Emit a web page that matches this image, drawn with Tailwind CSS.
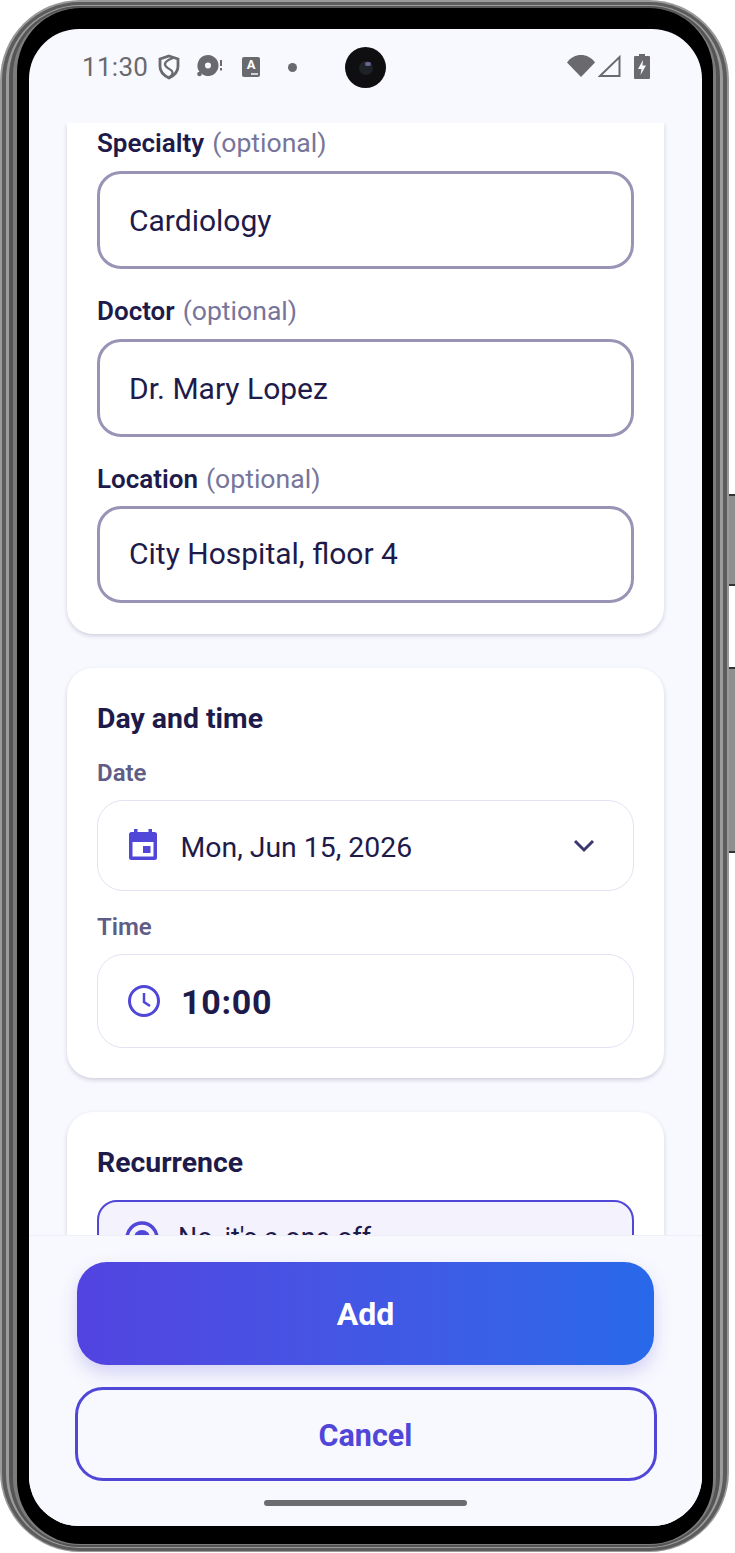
<!DOCTYPE html>
<html lang="en">
<head>
  <meta charset="UTF-8" />
  <title>Add appointment</title>
  <script src="https://cdn.jsdelivr.net/npm/@tailwindcss/browser@4"></script>
</head>
<body class="bg-white font-['Roboto',sans-serif]">
  <div class="relative w-[735px] h-[1553px] overflow-hidden">

    <!-- Side buttons -->
    <div class="absolute left-[729px] top-[494px] w-[6px] h-[92px] bg-[#8f8f8f] border-y-2 border-[#333]"></div>
    <div class="absolute left-[729px] top-[667px] w-[6px] h-[186px] bg-[#8f8f8f] border-y-2 border-[#333]"></div>

    <!-- Phone frame -->
    <div class="w-[729px] h-[1552px] rounded-[80px] bg-[#9a9a9a] pl-[2px] pr-[2px] pt-[2px] pb-[1px]">
      <div class="w-full h-full rounded-[78px] bg-[#5c5c5c] pl-[4px] pr-[4px] pt-[3px] pb-[3px]">
        <div class="w-full h-full rounded-[74px] bg-[#9c9c9c] pl-[3px] pr-[3px] pt-[1px] pb-[1px]">
          <div class="w-full h-full rounded-[71px] bg-[#555] pl-[4px] pr-[4px] pt-[2px] pb-[2px]">
            <div class="w-full h-full rounded-[67px] bg-[#7c7c7c] pl-[4px] pr-[3px] pt-[0px] pb-[1px]">
              <div class="w-full h-full rounded-[64px] bg-black pl-[12px] pt-[21px]">

                <!-- Screen -->
                <div class="w-[673px] h-[1497px] rounded-[50px] overflow-hidden bg-[#f8f9fe] flex flex-col">

                  <!-- Status bar -->
                  <div class="relative h-[94px] shrink-0 flex items-start px-[53px] pt-[20px] text-[#6a6a6e]">
                    <span class="text-[26px] leading-[36px] tracking-[0.3px] w-[76px]">11:30</span>
                    <svg class="w-[22px] h-[26px] mt-[5px]" viewBox="0 0 22 26" fill="none" stroke="#6a6a6e" stroke-width="2.800"><path d="M11 2l9 3v7.500c0 5.500-3.800 9-9 11.500-5.200-2.500-9-6-9-11.500V5z"/><path d="M15 4C9 6 5 9 8 12.500s7 3 6.500 6.500-2 3-3.500 4" stroke-width="2.200"/></svg>
                    <svg class="w-[25px] h-[24px] mt-[5px] ml-[17px]" viewBox="0 0 25 24" fill="#6a6a6e"><path fill-rule="evenodd" d="M11 1a10.500 10.500 0 1 1-7 18.300A10.500 10.500 0 0 1 11 1zm0 7.500a3 3 0 1 0 0 6 3 3 0 0 0 0-6z"/><circle cx="2.500" cy="20" r="2.300"/><rect x="23" y="6" width="2" height="6"/><rect x="23" y="14" width="2" height="2.500"/></svg>
                    <div class="relative w-[18px] h-[20px] mt-[8px] ml-[20px] rounded-[2px] bg-[#6a6a6e] text-white text-[13px] leading-[16px] font-bold text-center">A<span class="absolute right-[2px] bottom-[2px] w-[7px] h-[2px] bg-white/70"></span></div>
                    <div class="w-[9px] h-[9px] mt-[14px] ml-[28px] rounded-full bg-[#6a6a6e]"></div>

                    <!-- Camera -->
                    <div class="absolute left-[316px] top-[18px] w-[41px] h-[41px] rounded-full bg-[#0f0f12] flex items-center justify-center">
                      <div class="relative w-[14px] h-[14px] rounded-full bg-[#1d2228]">
                        <div class="absolute right-[2px] top-[1px] w-[6px] h-[4px] rounded-full bg-[#6c6490]"></div>
                      </div>
                    </div>

                    <div class="ml-auto flex items-start mt-[5px] mr-[-1px]">
                      <svg class="w-[28px] h-[24px]" viewBox="0 0 28 24" fill="#6a6a6e"><path d="M14 23L0 8.500C3.500 3.500 8.500 1 14 1s10.500 2.500 14 7.500z"/></svg>
                      <svg class="w-[23px] h-[24px] ml-[3px]" viewBox="0 0 23 24" fill="none" stroke="#6a6a6e" stroke-width="2"><path d="M21.500 3v19H2z"/></svg>
                      <svg class="w-[16px] h-[25px] ml-[13px]" viewBox="0 0 16 25" fill="#6a6a6e"><path fill-rule="evenodd" d="M5 0h6v2h4a1 1 0 0 1 1 1v21a1 1 0 0 1-1 1H1a1 1 0 0 1-1-1V3a1 1 0 0 1 1-1h4zM9 6l-5 9h3.500L6.500 21l5.500-9.500H8.500z"/></svg>
                    </div>
                  </div>

                  <!-- Scroll content -->
                  <div class="h-[1112px] shrink-0 overflow-hidden px-[38px] flex flex-col gap-[34px]">

                    <!-- Details card (scrolled) -->
                    <div class="bg-white rounded-b-[26px] shadow-[0_2px_4px_rgba(30,27,75,0.18)] px-[30px] pb-[31px] shrink-0">
                      <p class="h-[40px] text-[26px] leading-[40px] text-[#1e1b4b]"><span class="font-semibold">Specialty</span> <span class="ml-[1.500px] text-[26.600px] text-[#77759a]">(optional)</span></p>
                      <div class="h-[98px] mt-[8px] rounded-[24px] border-[3px] border-[#9894b6] flex items-center px-[29px] text-[30px] text-[#1e1b4b]">Cardiology</div>
                      <p class="h-[40px] mt-[22px] text-[26px] leading-[40px] text-[#1e1b4b]"><span class="font-semibold">Doctor</span> <span class="ml-[1.500px] text-[26.600px] text-[#77759a]">(optional)</span></p>
                      <div class="h-[98px] mt-[8px] rounded-[24px] border-[3px] border-[#9894b6] flex items-center px-[29px] text-[30px] text-[#1e1b4b]">Dr. Mary Lopez</div>
                      <p class="h-[40px] mt-[22px] text-[26px] leading-[40px] text-[#1e1b4b]"><span class="font-semibold">Location</span> <span class="ml-[1.500px] text-[26.600px] text-[#77759a]">(optional)</span></p>
                      <div class="h-[97px] mt-[7px] rounded-[24px] border-[3px] border-[#9894b6] flex items-center px-[29px] pb-[3px] text-[30px] text-[#1e1b4b]">City Hospital, floor 4</div>
                    </div>

                    <!-- Day and time card -->
                    <div class="h-[410px] shrink-0 bg-white rounded-[26px] shadow-[0_2px_4px_rgba(30,27,75,0.18)] px-[30px] pt-[31px]">
                      <h2 class="text-[28.400px] leading-[40px] font-bold text-[#1e1b4b]">Day and time</h2>
                      <p class="mt-[18px] text-[24px] leading-[32px] font-semibold text-[#5f5d86]">Date</p>
                      <div class="h-[91px] mt-[11px] rounded-[26px] border-[1.500px] border-[#e4e2f2] flex items-center pl-[30.500px] pr-[30px]">
                        <svg class="w-[28px] h-[31px] mb-[3px] text-[#5046d8]" viewBox="0 0 28 31" fill="currentColor"><path fill-rule="evenodd" d="M5 0h3.500v3h11V0H23v3h2.500A2.500 2.500 0 0 1 28 5.500v23a2.500 2.500 0 0 1-2.500 2.500h-23A2.500 2.500 0 0 1 0 28.500v-23A2.500 2.500 0 0 1 2.500 3H5zM3.500 13v14.500h21V13z"/><rect x="14" y="17" width="7.500" height="7"/></svg>
                        <span class="ml-[24px] pt-[5px] text-[28.400px] text-[#1e1b4b]">Mon, Jun 15, 2026</span>
                        <svg class="ml-auto mr-[8px] w-[22px] h-[14px]" viewBox="0 0 22 14" fill="none" stroke="#3b3870" stroke-width="3"><path d="M2 2l9 9 9-9"/></svg>
                      </div>
                      <p class="mt-[20px] text-[24px] leading-[32px] font-semibold text-[#5f5d86]">Time</p>
                      <div class="h-[94px] mt-[11px] rounded-[26px] border-[1.500px] border-[#e4e2f2] flex items-center pl-[30px] pr-[30px]">
                        <svg class="w-[32px] h-[32px]" viewBox="0 0 32 32" fill="none" stroke="#5046d8" stroke-width="3"><circle cx="16" cy="16" r="14.500"/><path d="M16 8v9l6 4" stroke-width="2.500"/></svg>
                        <span class="ml-[21px] pt-[2px] text-[34px] font-bold tracking-[0.7px] text-[#1e1b4b]">10:00</span>
                      </div>
                    </div>

                    <!-- Recurrence card -->
                    <div class="shrink-0 bg-white rounded-t-[26px] shadow-[0_2px_4px_rgba(30,27,75,0.18)] px-[30px] pt-[31px] h-[300px]">
                      <h2 class="text-[28.400px] leading-[40px] font-bold text-[#1e1b4b]">Recurrence</h2>
                      <div class="h-[76px] mt-[17px] rounded-[20px] border-2 border-[#5046d8] bg-[#f3f2fd] flex items-center pl-[26px] pr-[26px]">
                        <svg class="w-[34px] h-[34px]" viewBox="0 0 34 34" fill="none" stroke="#5046d8" stroke-width="3.500"><circle cx="17" cy="17" r="15"/><circle cx="17" cy="17" r="8" fill="#5046d8" stroke="none"/></svg>
                        <span class="ml-[19px] text-[26.900px] text-[#1e1b4b]">No, it's a one-off</span>
                      </div>
                    </div>
                  </div>

                  <!-- Bottom actions -->
                  <div class="relative flex-1 border-t border-[#eeeef6] bg-[#f8f9fe] flex flex-col items-center pt-[26px]">
                    <button class="w-[577px] h-[103px] rounded-[30px] bg-gradient-to-r from-[#5243e0] to-[#2769ea] shadow-[0_8px_18px_rgba(80,70,216,0.22)] text-white text-[32px] font-bold">Add</button>
                    <button class="w-[582px] h-[94px] mt-[22px] pt-[3px] rounded-[28px] border-[3px] border-[#5046d8] text-[#5046d8] text-[30.500px] font-bold">Cancel</button>
                    <div class="w-[203px] h-[6px] mt-[19px] rounded-full bg-[#6b6c70]"></div>
                  </div>
                </div>

              </div>
            </div>
          </div>
        </div>
      </div>
    </div>
  </div>
</body>
</html>
